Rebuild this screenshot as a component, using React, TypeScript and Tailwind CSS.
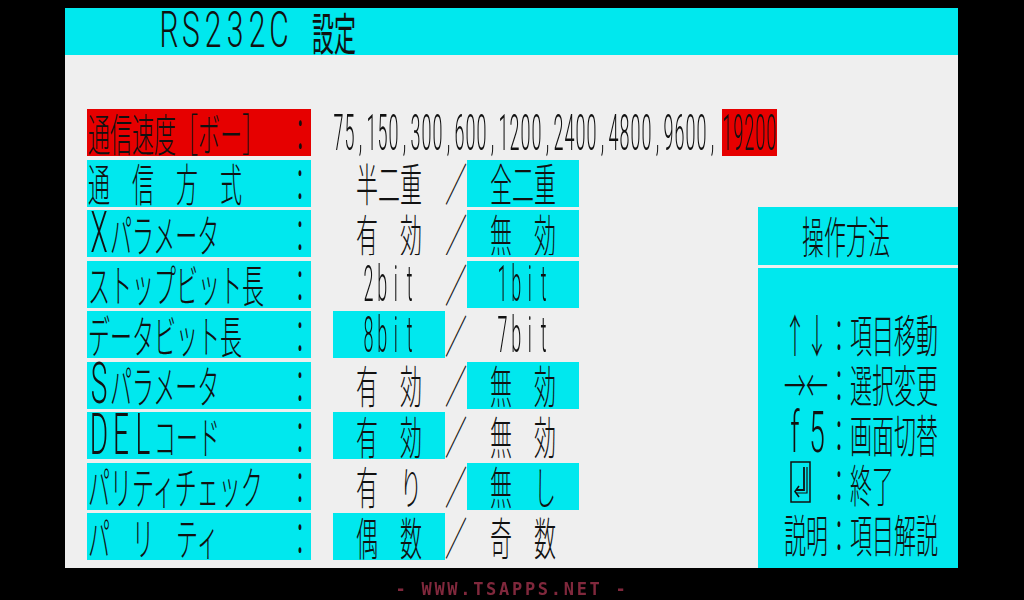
import React from "react";

// Terminal-style RS232C settings screen with tall, narrow glyphs.
const JP =
  "font-['Noto_Sans_CJK_JP',sans-serif] font-light text-[22px] leading-none inline-block whitespace-nowrap scale-y-[2.05] -translate-y-[2px] text-[#111]";

// Latin glyph styles, each character drawn in a fixed-width cell.
const LAT_SMALL =
  "font-['Roboto',sans-serif] font-light text-[18px] leading-none inline-block text-center scale-y-[2.75] text-[#111]";
const LAT_WIDE =
  "font-['Roboto',sans-serif] font-light text-[28px] leading-none inline-block text-center scale-y-[2.05] text-[#111]";
const LAT_TITLE =
  "font-['Roboto',sans-serif] font-light text-[30px] leading-none inline-block text-center scale-y-[1.65] -translate-y-[2px] text-[#111]";

function Cells({ text, cls, w }: { text: string; cls: string; w: string }) {
  return (
    <span className="inline-flex whitespace-nowrap">
      {Array.from(text).map((c, i) => (
        <span key={i} className={`${cls} ${w}`}>
          {c}
        </span>
      ))}
    </span>
  );
}

// Mixed label: runs of A-Z get wide Latin cells, the rest is Japanese text.
function Label({ text }: { text: string }) {
  const parts = text.split(/([A-Z]+)/).filter(Boolean);
  return (
    <span className="inline-flex items-center whitespace-nowrap">
      {parts.map((p, i) =>
        /^[A-Z]+$/.test(p) ? (
          <Cells key={i} text={p} cls={LAT_WIDE} w="w-[22px]" />
        ) : (
          <span key={i} className={JP}>
            {p}
          </span>
        )
      )}
    </span>
  );
}

const CYAN = "bg-[#00e8ee]";

type Row = {
  label: string;
  a?: string;
  b?: string;
  sel?: "a" | "b";
  latin?: boolean;
  baud?: boolean;
};

const rows: Row[] = [
  { label: "通信速度［ボー］", baud: true },
  { label: "通　信　方　式", a: "半二重", b: "全二重", sel: "b" },
  { label: "Xパラメータ", a: "有　効", b: "無　効", sel: "b" },
  { label: "ストップビット長", a: "2bit", b: "1bit", sel: "b", latin: true },
  { label: "データビット長", a: "8bit", b: "7bit", sel: "a", latin: true },
  { label: "Sパラメータ", a: "有　効", b: "無　効", sel: "b" },
  { label: "DELコード", a: "有　効", b: "無　効", sel: "a" },
  { label: "パリティチェック", a: "有　り", b: "無　し", sel: "b" },
  { label: "パ　リ　ティ", a: "偶　数", b: "奇　数", sel: "a" },
];

function Option({ text, on, latin }: { text: string; on: boolean; latin?: boolean }) {
  return (
    <div
      className={`w-[112px] h-full shrink-0 flex items-center justify-center ${on ? CYAN : ""}`}
    >
      {latin ? (
        <Cells text={text} cls={LAT_SMALL} w="w-[13.75px]" />
      ) : (
        <span className={JP}>{text}</span>
      )}
    </div>
  );
}

function EnterKey() {
  return (
    <svg width="22" height="42" viewBox="0 0 22 42" className="ml-[6px] -translate-y-[2px]">
      <rect x="1" y="1" width="19" height="40" fill="none" stroke="#111" strokeWidth="1.5" />
      <path d="M14 6 V29 H6" fill="none" stroke="#111" strokeWidth="1.8" />
      <path d="M17 6 V32 H6" fill="none" stroke="#111" strokeWidth="1.2" />
      <path d="M9 25 L5 30.5 L9 36" fill="none" stroke="#111" strokeWidth="1.6" />
    </svg>
  );
}

const help: { key: React.ReactNode; text: string }[] = [
  { key: <span className={JP}>↑↓</span>, text: "項目移動" },
  { key: <span className={JP}>→←</span>, text: "選択変更" },
  { key: <Cells text="f5" cls={LAT_WIDE} w="w-[22px]" />, text: "画面切替" },
  { key: <EnterKey />, text: "終了" },
  { key: <span className={JP}>説明</span>, text: "項目解説" },
];

export default function App() {
  return (
    <div className="w-[1024px] h-[600px] bg-black flex flex-col">
      <div className="ml-[65px] mt-[8px] w-[893px] h-[560px] bg-[#efefef] flex flex-col">
        {/* title bar */}
        <div className={`h-[47px] shrink-0 ${CYAN} flex items-center pl-[93px]`}>
          <Cells text="RS232C" cls={LAT_TITLE} w="w-[22px]" />
          <span className={`${JP} ml-[22px] font-normal`}>設定</span>
        </div>

        <div className="flex flex-1">
          {/* settings list */}
          <div className="w-[693px] shrink-0 pl-[22px] pt-[54px] flex flex-col gap-[3.5px]">
            {rows.map((r, i) => (
              <div key={i} className="flex h-[47px]">
                <div
                  className={`w-[224px] h-full shrink-0 flex items-center justify-between pl-[1px] ${
                    i === 0 ? "bg-[#e60000]" : CYAN
                  }`}
                >
                  <Label text={r.label} />
                  <span className={`${JP} w-[22px]`}>：</span>
                </div>
                <div className="ml-[22px] h-full flex items-center shrink-0">
                  {r.baud ? (
                    <>
                      <Cells
                        text="75,150,300,600,1200,2400,4800,9600,"
                        cls={LAT_SMALL}
                        w="w-[11px]"
                      />
                      <div className="ml-[4px] h-full w-[55px] shrink-0 bg-[#e60000] flex items-center">
                        <Cells text="19200" cls={LAT_SMALL} w="w-[11px]" />
                      </div>
                    </>
                  ) : (
                    <>
                      <Option text={r.a!} on={r.sel === "a"} latin={r.latin} />
                      <div className="w-[22px] shrink-0 flex justify-center">
                        <span className={JP}>／</span>
                      </div>
                      <Option text={r.b!} on={r.sel === "b"} latin={r.latin} />
                    </>
                  )}
                </div>
              </div>
            ))}
          </div>

          {/* key guide */}
          <div className="w-[200px] shrink-0 pt-[152px] flex flex-col">
            <div className={`h-[58px] shrink-0 ${CYAN} flex items-center pl-[44px]`}>
              <span className={JP}>操作方法</span>
            </div>
            <div className={`mt-[3px] flex-1 ${CYAN} pt-[41px] pl-[26px] flex flex-col`}>
              {help.map((h, i) => (
                <div key={i} className="h-[50px] flex items-center">
                  <div className="w-[44px] shrink-0 flex items-center">{h.key}</div>
                  <span className={`${JP} w-[22px]`}>：</span>
                  <span className={JP}>{h.text}</span>
                </div>
              ))}
            </div>
          </div>
        </div>
      </div>

      {/* footer */}
      <div className="flex justify-center pt-[13px]">
        <span className="font-['DejaVu_Sans_Mono',monospace] font-bold text-[17px] leading-none tracking-[2.7px] text-[#80283c] blur-[0.4px]">
          - WWW.TSAPPS.NET -
        </span>
      </div>
    </div>
  );
}
